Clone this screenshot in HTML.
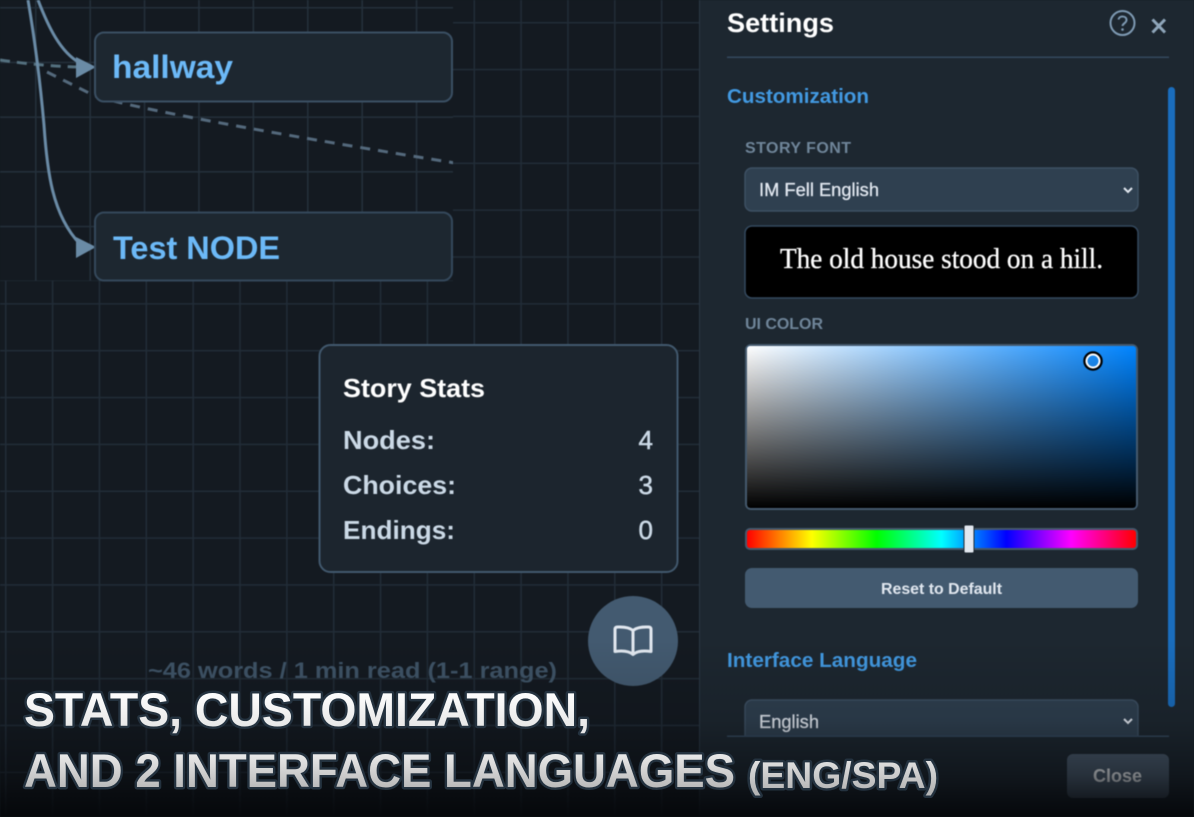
<!DOCTYPE html>
<html lang="en"><head><meta charset="utf-8"><title>Settings</title>
<style>
html,body{margin:0;padding:0;background:#141b22;width:1194px;height:817px;overflow:hidden}
svg{display:block}
text{font-family:"Liberation Sans",sans-serif;font-weight:700}
.soft{filter:blur(.4px)}
</style></head><body>
<svg xmlns="http://www.w3.org/2000/svg" width="1194" height="817" viewBox="0 0 1194 817">
<defs>
<pattern id="g1" x="5" y="22" width="46.85" height="46.85" patternUnits="userSpaceOnUse">
<path d="M0.75 0V46.85M0 0.75H46.85" stroke="#212c37" stroke-width="1.5" fill="none"/></pattern>
<pattern id="g2" x="35" y="7" width="54.4" height="54.7" patternUnits="userSpaceOnUse">
<path d="M0.75 0V54.7M0 0.75H54.4" stroke="#24303b" stroke-width="1.5" fill="none"/></pattern>
<linearGradient id="sx"><stop offset="0" stop-color="#fff"/><stop offset="1" stop-color="#fff" stop-opacity="0"/></linearGradient>
<linearGradient id="sb" x1="0" y1="0" x2="0" y2="1"><stop offset="0" stop-color="#000" stop-opacity="0"/><stop offset="1" stop-color="#000"/></linearGradient>
<linearGradient id="hue"><stop offset="0" stop-color="#f00"/><stop offset=".1667" stop-color="#ff0"/><stop offset=".3333" stop-color="#0f0"/><stop offset=".5" stop-color="#0ff"/><stop offset=".6667" stop-color="#00f"/><stop offset=".8333" stop-color="#f0f"/><stop offset="1" stop-color="#f00"/></linearGradient>
<linearGradient id="ov" x1="0" y1="0" x2="0" y2="1"><stop offset="0" stop-color="#05070a" stop-opacity="0"/><stop offset=".45" stop-color="#05070a" stop-opacity=".15"/><stop offset=".76" stop-color="#05070a" stop-opacity=".5"/><stop offset="1" stop-color="#05070a" stop-opacity=".97"/></linearGradient>
<linearGradient id="t1" x1="0" y1="691" x2="0" y2="728" gradientUnits="userSpaceOnUse"><stop offset="0" stop-color="#fff"/><stop offset="1" stop-color="#e6e6e6"/></linearGradient>
<linearGradient id="t2" x1="0" y1="752" x2="0" y2="792" gradientUnits="userSpaceOnUse"><stop offset="0" stop-color="#ececec"/><stop offset="1" stop-color="#b4b4b4"/></linearGradient>
<clipPath id="c1"><rect x="0" y="0" width="453" height="281"/></clipPath>
</defs>

<g class="soft">
<rect width="1194" height="817" fill="#141a21"/>
<rect width="700" height="817" fill="url(#g1)"/>
<rect width="453" height="281" fill="#141a21"/>
<rect width="453" height="281" fill="url(#g2)"/>

<g clip-path="url(#c1)" fill="none">
<path d="M0 60Q40 66 80 67" stroke="#54707f" stroke-width="3" stroke-dasharray="10 7"/>
<path d="M47 72L95 96C130 107 250 130 455 163" stroke="#54697c" stroke-width="3" stroke-dasharray="10 8"/>
<path d="M38 0C48 26 60 52 80 63" stroke="#6a8ba6" stroke-width="3"/>
<path d="M28 0C34 35 40 80 44 125C47 170 52 215 80 244" stroke="#6a8ba6" stroke-width="3"/>
<path d="M76 57L96 67L76 78Z" fill="#6a8ba6"/>
<path d="M76 237L96 247L76 258Z" fill="#6a8ba6"/>
</g>

<rect x="95" y="32.500" width="357" height="69" rx="9" fill="#1d2730" stroke="#3a4f63" stroke-width="2"/>
<rect x="95" y="212.500" width="357" height="68" rx="9" fill="#1d2730" stroke="#34485b" stroke-width="2"/>
<text x="112" y="78" font-size="32" fill="#6cb9f7" textLength="121" lengthAdjust="spacingAndGlyphs">hallway</text>
<text x="113" y="259" font-size="32" fill="#6cb9f7" textLength="167" lengthAdjust="spacingAndGlyphs">Test NODE</text>

<rect x="319.500" y="345" width="358" height="227" rx="11" fill="#1c252e" stroke="#41586d" stroke-width="2"/>
<text x="343" y="397" font-size="26" fill="#fff" textLength="142" lengthAdjust="spacingAndGlyphs">Story Stats</text>
<text x="343" y="449" font-size="26" fill="#cbd9e6" textLength="92" lengthAdjust="spacingAndGlyphs">Nodes:</text>
<text x="343" y="494" font-size="26" fill="#cbd9e6" textLength="113" lengthAdjust="spacingAndGlyphs">Choices:</text>
<text x="343" y="539" font-size="26" fill="#cbd9e6" textLength="112" lengthAdjust="spacingAndGlyphs">Endings:</text>
<text x="653" y="449" font-size="26" fill="#cbd9e6" stroke="#cbd9e6" stroke-width=".5" text-anchor="end" style="font-weight:400">4</text>
<text x="653" y="494" font-size="26" fill="#cbd9e6" stroke="#cbd9e6" stroke-width=".5" text-anchor="end" style="font-weight:400">3</text>
<text x="653" y="539" font-size="26" fill="#cbd9e6" stroke="#cbd9e6" stroke-width=".5" text-anchor="end" style="font-weight:400">0</text>

<circle cx="633" cy="641" r="45" fill="#435a70"/>
<path d="M633 630.500C630 628 625 627 620 627H617.500Q615 627 615 629.500V651.500C622 650.500 629 651 633 654.500C637 651 644 650.500 651 651.500V629.500Q651 627 648.500 627H646C641 627 636 628 633 630.500ZM633 630.500V654" fill="none" stroke="#e2e8f0" stroke-width="3" stroke-linejoin="round"/>

<text x="148" y="678" font-size="22" fill="#3f5467" textLength="409" lengthAdjust="spacingAndGlyphs">~46 words / 1 min read (1-1 range)</text>

<rect x="699" y="0" width="495" height="817" fill="#1d2730"/>
<rect x="699" y="0" width="1" height="817" fill="#2a3744"/>
<text x="727" y="32" font-size="27" fill="#fff" textLength="107" lengthAdjust="spacingAndGlyphs">Settings</text>
<circle cx="1122.500" cy="23" r="12" fill="none" stroke="#7e9ab3" stroke-width="2"/>
<path d="M1118.500 19.500C1119 15.500 1126.500 15.500 1126.500 20C1126.500 23 1122.500 23.500 1122.500 26" fill="none" stroke="#7e9ab3" stroke-width="2"/>
<circle cx="1122.500" cy="29.500" r="1.300" fill="#7e9ab3"/>
<path d="M1152.500 19.500L1165 32.500M1165 19.500L1152.500 32.500" stroke="#8fa6ba" stroke-width="3" fill="none"/>
<rect x="727" y="56.500" width="442" height="1.500" fill="#34495e"/>
<text x="727" y="103" font-size="20" fill="#4299e1" textLength="142" lengthAdjust="spacingAndGlyphs">Customization</text>
<rect x="1168" y="87" width="7" height="620" rx="3.500" fill="#1a6dbd"/>

<text x="745" y="153" font-size="16" fill="#6f8599" textLength="106" lengthAdjust="spacing">STORY FONT</text>
<rect x="745" y="168" width="393" height="43" rx="7" fill="#2f4050" stroke="#3d5063" stroke-width="1.500"/>
<text x="759" y="196" font-size="18" fill="#e2e8f0" stroke="#e2e8f0" stroke-width=".3" textLength="120" lengthAdjust="spacingAndGlyphs" style="font-weight:400">IM Fell English</text>
<path d="M1124 188L1128 192L1132 188" fill="none" stroke="#e2e8f0" stroke-width="2"/>
<rect x="745" y="226" width="393" height="72" rx="7" fill="#000" stroke="#34495e" stroke-width="1.500"/>
<text x="780" y="268" font-size="28" fill="#fff" stroke="#fff" stroke-width=".3" textLength="323" lengthAdjust="spacingAndGlyphs" style="font-family:'Liberation Serif',serif;font-weight:400">The old house stood on a hill.</text>

<text x="745" y="329" font-size="16" fill="#6f8599" textLength="78" lengthAdjust="spacing">UI COLOR</text>
<rect x="745" y="344" width="393" height="166" rx="6" fill="#44596d"/>
<rect x="747" y="346" width="389" height="162" rx="3" fill="#0084ff"/>
<rect x="747" y="346" width="389" height="162" rx="3" fill="url(#sx)"/>
<rect x="747" y="346" width="389" height="162" rx="3" fill="url(#sb)"/>
<circle cx="1093" cy="361" r="8.500" fill="none" stroke="#000" stroke-width="2.500"/>
<circle cx="1093" cy="361" r="6.500" fill="none" stroke="#fff" stroke-width="2"/>

<rect x="745" y="528" width="393" height="22" rx="5" fill="#44596d"/>
<rect x="747" y="530" width="389" height="18" rx="3" fill="url(#hue)"/>
<rect x="964" y="525" width="10" height="28" rx="1.500" fill="#e2e8f0" stroke="#1d2730" stroke-width="1"/>

<rect x="745" y="568" width="393" height="40" rx="7" fill="#435a70"/>
<text x="881" y="594" font-size="16" fill="#e2e8f0" textLength="121" lengthAdjust="spacingAndGlyphs">Reset to Default</text>

<text x="727" y="667" font-size="20" fill="#4299e1" textLength="190" lengthAdjust="spacingAndGlyphs">Interface Language</text>
<rect x="745" y="700" width="393" height="50" rx="7" fill="#2f4050" stroke="#3d5063" stroke-width="1.500"/>
<text x="759" y="728" font-size="18" fill="#e2e8f0" stroke="#e2e8f0" stroke-width=".3" textLength="60" lengthAdjust="spacingAndGlyphs" style="font-weight:400">English</text>
<path d="M1124 719L1128 723L1132 719" fill="none" stroke="#e2e8f0" stroke-width="2"/>
<rect x="700" y="736" width="494" height="81" fill="#1d2730"/>
<rect x="727" y="735.500" width="442" height="1.500" fill="#34495e"/>
<rect x="1067" y="754" width="102" height="44" rx="6" fill="#4a5b6d"/>
<text x="1093" y="782" font-size="18" fill="#f0f4f8" textLength="49" lengthAdjust="spacingAndGlyphs">Close</text>

<rect x="0" y="640" width="1194" height="177" fill="url(#ov)"/>
</g>

<g stroke="#24323f" stroke-width="5" stroke-linejoin="round" style="paint-order:stroke">
<text x="24" y="726" font-size="47.5" fill="url(#t1)" textLength="566" lengthAdjust="spacingAndGlyphs">STATS, CUSTOMIZATION,</text>
<text x="24" y="787" font-size="47.5" fill="url(#t2)" textLength="711" lengthAdjust="spacingAndGlyphs">AND 2 INTERFACE LANGUAGES</text>
<text x="748" y="788" font-size="37" fill="url(#t2)" textLength="190" lengthAdjust="spacingAndGlyphs">(ENG/SPA)</text>
</g>
</svg>
</body></html>
